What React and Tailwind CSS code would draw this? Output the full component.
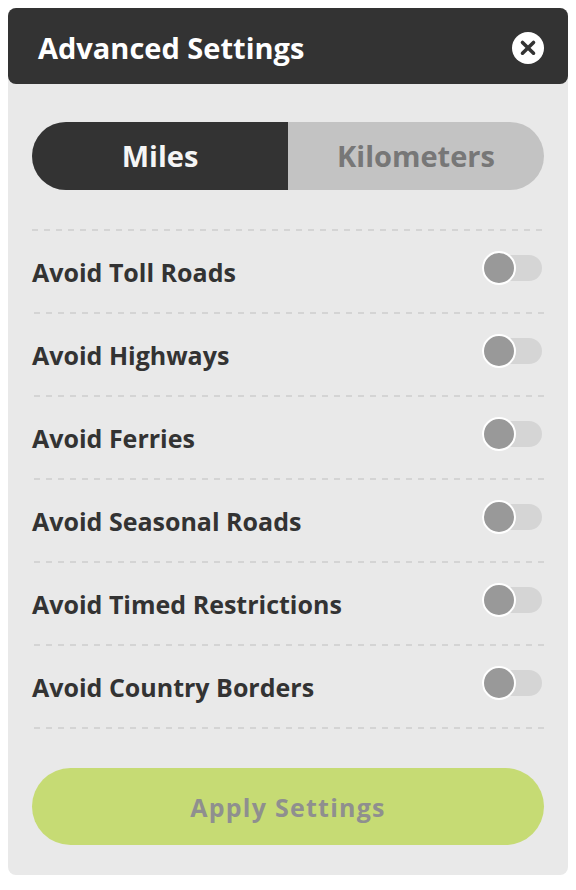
import React, { useState } from "react";

const units = ["Miles", "Kilometers"];

const avoidOptions = [
  { id: "tolls", label: "Avoid Toll Roads" },
  { id: "highways", label: "Avoid Highways" },
  { id: "ferries", label: "Avoid Ferries" },
  { id: "seasonal", label: "Avoid Seasonal Roads" },
  { id: "timed", label: "Avoid Timed Restrictions" },
  { id: "borders", label: "Avoid Country Borders" },
];

const CloseIcon = () => (
  <svg viewBox="0 0 32 32" className="size-8" aria-hidden="true">
    <circle cx="16" cy="16" r="16" fill="#fff" />
    <path
      d="M10.5 10.5 21.5 21.2M21.5 10.5 10.5 21.2"
      stroke="#333"
      strokeWidth="3.6"
      strokeLinecap="round"
    />
  </svg>
);

const UnitPicker = ({ unit, onChange }) => (
  <div className="flex overflow-hidden rounded-full bg-[#c3c3c3] text-[29px] leading-8">
    {units.map((name) => (
      <label
        key={name}
        className="flex h-[68px] flex-1 cursor-pointer items-center justify-center text-[#777] has-checked:bg-[#333] has-checked:text-[#f5f5f5]"
      >
        <input
          className="sr-only"
          type="radio"
          name="unit"
          value={name}
          checked={unit === name}
          onChange={() => onChange(name)}
        />
        {name}
      </label>
    ))}
  </div>
);

// 6px dash, 6px gap
const DashedRule = () => (
  <div className="h-0.5 bg-[repeating-linear-gradient(to_left,#d4d4d4_0_6px,transparent_6px_12px)] first:bg-[repeating-linear-gradient(to_right,#d4d4d4_0_6px,transparent_6px_12px)]" />
);

const OptionRow = ({ id, label, checked, onToggle }) => (
  <li>
    <div className="flex h-[81px] items-center justify-between pr-0.5">
      <label htmlFor={id}>{label}</label>
      <div className="pb-2">
        <input
          id={id}
          type="checkbox"
          role="switch"
          checked={checked}
          onChange={() => onToggle(id)}
          className="flex h-[26px] w-[60px] cursor-pointer appearance-none items-center rounded-full bg-[#d5d5d5] before:size-[34px] before:shrink-0 before:rounded-full before:border-2 before:border-white before:bg-[#999] before:content-[''] checked:justify-end checked:before:bg-[#c6db74]"
        />
      </div>
    </div>
    <DashedRule />
  </li>
);

const App = () => {
  const [unit, setUnit] = useState("Miles");
  const [avoid, setAvoid] = useState({});

  const handleToggle = (id) => {
    setAvoid({ ...avoid, [id]: !avoid[id] });
  };

  return (
    <div className="p-2 font-['Open_Sans',sans-serif] font-bold text-[#333]">
      <form
        className="rounded-lg bg-[#e9e9e9]"
        onSubmit={(e) => e.preventDefault()}
      >
        <header className="flex h-[76px] items-center justify-between rounded-lg bg-[#333] pt-1 pr-6 pl-[30px] text-white">
          <h1 className="text-[29px] leading-8">Advanced Settings</h1>
          <button type="button" aria-label="Close" className="cursor-pointer">
            <CloseIcon />
          </button>
        </header>
        <div className="px-6 pt-[38px] pb-[30px]">
          <UnitPicker unit={unit} onChange={setUnit} />
          <div className="mt-[39px] mb-[39px]">
            <DashedRule />
            <ul className="text-[25px] leading-8">
              {avoidOptions.map((option) => (
                <OptionRow
                  key={option.id}
                  id={option.id}
                  label={option.label}
                  checked={!!avoid[option.id]}
                  onToggle={handleToggle}
                />
              ))}
            </ul>
          </div>
          <button
            type="submit"
            className="h-[77px] w-full cursor-pointer rounded-full bg-[#c6db74] text-[25px] leading-8 tracking-wider text-[#8f8f8f]"
          >
            Apply Settings
          </button>
        </div>
      </form>
    </div>
  );
};

export default App;
